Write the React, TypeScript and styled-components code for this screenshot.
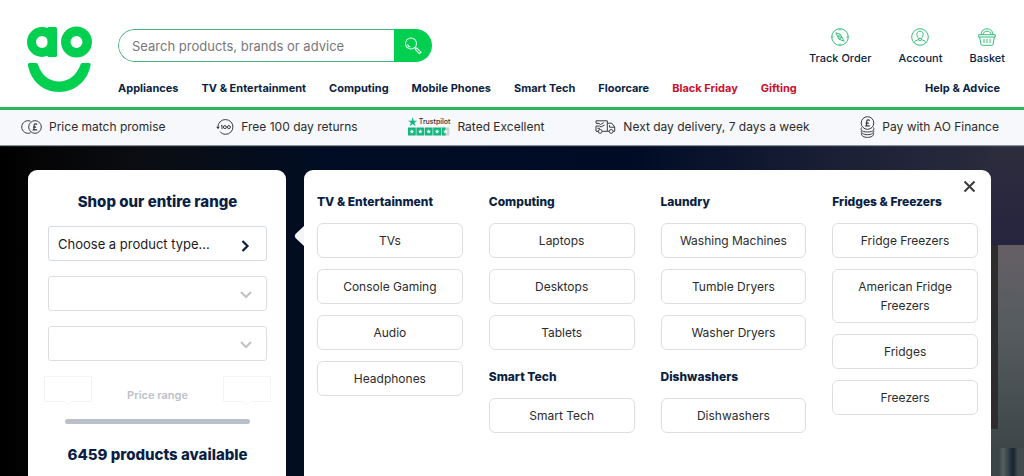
import React from "react";
import styled, { createGlobalStyle } from "styled-components";

const navy = "#0b1f44";
const green = "#00cf50";

const GlobalStyle = createGlobalStyle`
  *, *::before, *::after { box-sizing: border-box; }
  body { margin: 0; background: #fff; font-family: Inter, "Liberation Sans", sans-serif; color: #2b2b2e; }
  button, input, select { font-family: inherit; }
  a { color: inherit; text-decoration: none; }
  h2, h3, ul, p { margin: 0; padding: 0; }
  ul { list-style: none; }
`;

const Page = styled.div`
  min-height: 100vh;
  display: flex;
  flex-direction: column;
`;

const Header = styled.header`
  display: flex;
  gap: 26px;
  padding: 26px 19px 12px 26px;
  border-bottom: 3px solid #2bb75c;
`;

const LogoLink = styled.a`
  flex: none;
  width: 66px;
  height: 66px;
  svg { display: block; }
`;

const HeaderMain = styled.div`
  flex: 1;
  min-width: 0;
  display: flex;
  flex-direction: column;
  gap: 16px;
`;

const HeaderTop = styled.div`
  display: flex;
  justify-content: space-between;
  align-items: flex-start;
`;

const SearchForm = styled.form`
  display: flex;
  width: 314px;
  height: 33px;
  margin-top: 3px;
  border-radius: 17px;
  overflow: hidden;
`;

const SearchInput = styled.input`
  flex: 1;
  min-width: 0;
  padding: 0 13px;
  border: 1px solid #46b27c;
  border-right: 0;
  border-radius: 17px 0 0 17px;
  font-size: 13px;
  color: #333;
  outline: none;
  &::placeholder { color: #77777a; opacity: 1; }
`;

const SearchButton = styled.button`
  width: 38px;
  padding: 0;
  border: 0;
  background: ${green};
  display: flex;
  align-items: center;
  justify-content: center;
`;

const Account = styled.nav`
  display: flex;
  gap: 27px;
  padding-top: 2px;
`;

const AccountLink = styled.a`
  display: flex;
  flex-direction: column;
  align-items: center;
  gap: 5px;
  font-size: 11px;
  line-height: 14px;
  font-weight: 500;
  color: ${navy};
`;

const MainNav = styled.nav`
  display: flex;
  gap: 23px;
  padding-right: 5px;
  font-size: 11px;
  line-height: 14px;
  font-weight: 700;
  color: ${navy};
  white-space: nowrap;
`;

const NavLink = styled.a<{ $hot?: boolean; $end?: boolean }>`
  color: ${(p) => (p.$hot ? "#c8102e" : navy)};
  margin-left: ${(p) => (p.$end ? "auto" : "0")};
`;

const Promises = styled.ul`
  position: relative;
  display: flex;
  justify-content: space-between;
  align-items: center;
  height: 35px;
  padding: 0 25px 2px 21px;
  background: #f7f8fb;
  box-shadow: 0 1px 1px #8b9096;
  font-size: 12px;
  white-space: nowrap;
`;

const PromiseItem = styled.li`
  display: flex;
  align-items: center;
  gap: 7px;
`;

const Trust = styled.span`
  display: flex;
  flex-direction: column;
  width: 42px;
`;

const TrustName = styled.span`
  display: flex;
  align-items: center;
  gap: 1px;
  font-size: 7px;
  line-height: 10px;
  font-weight: 500;
`;

const Hero = styled.main`
  flex: 1;
  display: flex;
  align-items: stretch;
  gap: 18px;
  padding: 25px 33px 0 28px;
  background:
    linear-gradient(#2d2d2e, #2d2d2e) right 26px top 100px / 8px 184px no-repeat,
    linear-gradient(90deg, #3d4446 0 8px, #56605f 12px, #34444a 17px, #172330 22px, #424b4d 27px) right 0 top 303px / 33px 100% no-repeat,
    linear-gradient(#655f65, #565c60 40%, #3e4648) right 0 top 100px / 33px 203px no-repeat,
    linear-gradient(#2d2d3d, #27243f) right 0 top 0 / 33px 100px no-repeat,
    linear-gradient(90deg, #000 0, #050506 4%, #0b0d12 14%, #000d24 32%, #000c26 62%, #1b2036 82%, #2d2d3d 100%);
`;

const Finder = styled.section`
  flex: none;
  width: 258px;
  padding: 22px 19px 0 20px;
  border-radius: 9px 9px 0 0;
  background: #fff;
`;

const FinderTitle = styled.h2`
  font-size: 15px;
  line-height: 20px;
  font-weight: 800;
  color: ${navy};
  text-align: center;
`;

const Fields = styled.div`
  display: flex;
  flex-direction: column;
  gap: 15px;
  margin-top: 14px;
`;

const TypeButton = styled.button`
  display: flex;
  align-items: center;
  justify-content: space-between;
  height: 35px;
  padding: 0 16px 0 9px;
  border: 1px solid #d5dbe0;
  border-radius: 3px;
  background: #fff;
  font-size: 13px;
  color: #1c1c1f;
  svg { margin-top: 4px; }
`;

const SelectBox = styled.div`
  display: grid;
  align-items: center;
  svg { grid-area: 1 / 1; justify-self: end; margin: 2px 15px 0 0; pointer-events: none; }
`;

const Select = styled.select`
  grid-area: 1 / 1;
  width: 100%;
  height: 35px;
  border: 1px solid #dcdfe2;
  border-radius: 3px;
  background: #fff;
  appearance: none;
  opacity: 1;
`;

const PriceRow = styled.div`
  display: flex;
  justify-content: space-between;
  align-items: flex-start;
  margin: 15px -4px 0;
`;

const Bubble = styled.output`
  width: 48px;
  height: 29px;
  svg { display: block; }
`;

const PriceLabel = styled.label`
  padding-top: 12px;
  font-size: 11px;
  line-height: 14px;
  font-weight: 600;
  color: #bcc1c8;
`;

const Range = styled.input`
  display: block;
  appearance: none;
  width: calc(100% - 34px);
  height: 5px;
  margin: 14px 17px 0;
  border-radius: 3px;
  background: #b9c0c8;
  &::-webkit-slider-thumb { appearance: none; width: 0; height: 0; }
`;

const Available = styled.p`
  margin-top: 21px;
  font-size: 15px;
  line-height: 20px;
  font-weight: 800;
  color: ${navy};
  text-align: center;
  white-space: nowrap;
`;

const Menu = styled.section`
  position: relative;
  flex: 1;
  min-width: 0;
  display: grid;
  grid-template-columns: repeat(4, minmax(0, 1fr));
  align-content: start;
  gap: 26px;
  padding: 22px 13px 0;
  border-radius: 9px 9px 0 0;
  background: #fff;
`;

const Pointer = styled.svg`
  position: absolute;
  left: -10px;
  top: 56px;
`;

const CloseButton = styled.button`
  position: absolute;
  top: 10px;
  right: 15px;
  width: 13px;
  height: 13px;
  padding: 0;
  border: 0;
  background: none;
  svg { display: block; }
`;

const MenuColumn = styled.div`
  display: flex;
  flex-direction: column;
  gap: 17px;
`;

const GroupTitle = styled.h3`
  margin-bottom: 12px;
  font-size: 12px;
  line-height: 19px;
  font-weight: 800;
  color: ${navy};
  white-space: nowrap;
`;

const GroupList = styled.ul`
  display: flex;
  flex-direction: column;
  gap: 11px;
`;

const Category = styled.a`
  display: block;
  padding: 7px 16px;
  border: 1px solid #dcdfe2;
  border-radius: 6px;
  font-size: 12px;
  line-height: 19px;
  text-align: center;
`;

const Logo = () => (
  <svg width="66" height="66" viewBox="0 0 66 66" fill="none">
    <circle cx="16" cy="16" r="10.5" stroke={green} strokeWidth="9" />
    <rect x="21.500" y="1" width="9.500" height="30" rx="1.500" fill={green} />
    <circle cx="50.500" cy="16" r="10.700" stroke={green} strokeWidth="9.500" />
    <path d="M3.500 37H10.500Q11.500 37 12 38.500C15 49 23.500 55.500 33 55.500S51 49 54.500 38.500Q55 37 56 37H63Q65 37 64.500 39.500C61.500 55 49 66 33 66S5 55 2 39.500Q1.500 37 3.500 37Z" fill={green} />
  </svg>
);

const SearchIcon = () => (
  <svg width="18" height="18" viewBox="0 0 18 18" fill="none" stroke="#e6fff0" strokeWidth="1.100">
    <circle cx="7" cy="6.500" r="5.500" />
    <path d="M3.500 7.500A3.800 3.800 0 0 0 6.500 10M10.800 10.500L12 11.700M11.300 12.500L12.800 11L17 15.200L15.500 16.700Z" />
  </svg>
);

const iconProps = { width: 18, height: 18, viewBox: "0 0 18 18", fill: "none", stroke: "#35bd78", strokeWidth: 1 };

const TrackIcon = () => (
  <svg {...iconProps}>
    <circle cx="9" cy="9" r="8.300" />
    <path d="M4.800 4.800L9.200 6.200L13.200 13.200L8 11.200ZM7 8.600L9.200 6.200M8 11.200L11 9.200M7 8.600L11 9.200M9 1V2.500M9 15.500V17M1 9H2.500M15.500 9H17" />
  </svg>
);

const AccountIcon = () => (
  <svg {...iconProps}>
    <circle cx="9" cy="9" r="8.300" />
    <path d="M9 3.200C6.900 3.200 5.800 4.600 5.900 6.600C6 8.600 7.200 10.600 9 10.600S12 8.600 12.100 6.600C12.200 4.600 11.100 3.200 9 3.200ZM7.500 10.400V11.800L9 13L10.500 11.800V10.400M7.500 11.800C5.500 12.200 3.800 12.900 3.200 14.600M10.500 11.800C12.500 12.200 14.200 12.900 14.800 14.600" />
  </svg>
);

const BasketIcon = () => (
  <svg {...iconProps}>
    <path d="M.7 6.700H17.300V9H.7ZM1.700 9L2.900 16.200Q3.100 17.300 4.200 17.300H13.800Q14.900 17.300 15.100 16.200L16.300 9M6 10.800V15M9 10.800V15M12 10.800V15M3 6.700C3.200 3 5.500 .8 9 .8S14.800 3 15 6.700M5 6.700C5.300 4.300 6.700 3.200 9 3.200S12.700 4.300 13 6.700" />
  </svg>
);

const PriceIcon = () => (
  <svg width="21" height="14" viewBox="0 0 21 14" fill="none" stroke="#3a3a3d">
    <circle cx="14" cy="7" r="6.300" />
    <path d="M9.500 1.200A6.300 6.300 0 1 0 9.500 12.800" />
    <path strokeWidth="1.200" d="M16 4.700C15.500 3.400 13.300 3.500 13.100 5.200C13 6.800 13.600 8.500 12.400 9.900H16.200M12 7.100H15.200" />
  </svg>
);

const ReturnIcon = () => (
  <svg width="18" height="16" viewBox="0 0 18 16" fill="none" stroke="#3a3a3d">
    <path d="M2 9C1.600 4 5.200 .6 9.600 .6A7.300 7.300 0 0 1 9.600 15.300C7.300 15.300 5.300 14.300 4 12.600" />
    <path d="M.2 7.800H3.800L2 10.200Z" fill="#3a3a3d" stroke="none" />
    <path d="M5 6.700L6 6.200V10" />
    <circle cx="8.900" cy="8.100" r="1.500" />
    <circle cx="12.900" cy="8.100" r="1.500" />
  </svg>
);

const VanIcon = () => (
  <svg width="21" height="14" viewBox="0 0 21 14" fill="none" stroke="#3a3a3d">
    <path d="M1 3V.8H12.300V11.300H7.300M3.200 11.300H1V6M12.300 3.200H16.800L19.700 7V11.300H18.300M14 11.300H12.300M14.500 5.200V7.200H19.500" />
    <path d="M1 3.400H4L5.500 4.600L8.800 2.500M1 6H4.500L6 7L9.500 5M2.500 8.300H5" />
    <circle cx="5.200" cy="11.400" r="1.900" />
    <circle cx="16.200" cy="11.400" r="1.900" />
  </svg>
);

const CoinsIcon = () => (
  <svg width="15" height="22" viewBox="0 0 15 22" fill="none" stroke="#3a3a3d">
    <circle cx="7.500" cy="7" r="6.300" />
    <path d="M1.500 11.500C.5 13 1 16 7.500 16S14.500 13 13.500 11.500M1.300 14.500C.8 17 3.500 18.700 7.500 18.700S14.200 17 13.700 14.500M1.300 17.200C1.200 20 4 21.400 7.500 21.400S13.800 20 13.700 17.200" />
    <path strokeWidth="1.200" d="M9.600 4.700C9.100 3.400 6.900 3.500 6.700 5.200C6.600 6.800 7.200 8.500 6 9.900H9.800M5.600 7.100H8.800" />
  </svg>
);

const starPath = "M5 0L6.200 3.600H10L6.900 5.800L8.100 9.500L5 7.200L1.900 9.500L3.100 5.800L0 3.600H3.800Z";

const TrustStars = () => (
  <svg width="42" height="9" viewBox="0 0 42 9">
    {[0, 1, 2, 3, 4].map((i) => (
      <g key={i} transform={`translate(${i * 8.4} .5)`}>
        <rect width="7.800" height="8" fill={i === 4 ? "#c9d3d3" : "#12b67e"} />
        {i === 4 && <rect width="4" height="8" fill="#12b67e" />}
        <path d={starPath} transform="translate(1.400 1.500) scale(.5)" fill="#fff" />
      </g>
    ))}
  </svg>
);

const menu = [
  [{ title: "TV & Entertainment", items: ["TVs", "Console Gaming", "Audio", "Headphones"] }],
  [
    { title: "Computing", items: ["Laptops", "Desktops", "Tablets"] },
    { title: "Smart Tech", items: ["Smart Tech"] },
  ],
  [
    { title: "Laundry", items: ["Washing Machines", "Tumble Dryers", "Washer Dryers"] },
    { title: "Dishwashers", items: ["Dishwashers"] },
  ],
  [{ title: "Fridges & Freezers", items: ["Fridge Freezers", "American Fridge Freezers", "Fridges", "Freezers"] }],
];

const departments = ["Appliances", "TV & Entertainment", "Computing", "Mobile Phones", "Smart Tech", "Floorcare"];

const DisabledSelect = ({ label }: { label: string }) => (
  <SelectBox>
    <Select disabled aria-label={label} />
    <svg width="12" height="8" viewBox="0 0 12 8" fill="none" stroke="#bfc1c4" strokeWidth="2">
      <path d="M1 1L6 6L11 1" />
    </svg>
  </SelectBox>
);

const PriceBubble = () => (
  <Bubble>
    <svg width="48" height="29" viewBox="0 0 48 29" fill="none" stroke="#f4f4f5">
      <path d="M.5 .5H47.500V25.500H28L24 28.500L20 25.500H.5Z" />
    </svg>
  </Bubble>
);

export default function App() {
  return (
    <Page>
      <GlobalStyle />
      <Header>
        <LogoLink href="#" aria-label="AO home"><Logo /></LogoLink>
        <HeaderMain>
          <HeaderTop>
            <SearchForm role="search">
              <SearchInput type="search" aria-label="Search" placeholder="Search products, brands or advice" />
              <SearchButton type="button" aria-label="Submit search"><SearchIcon /></SearchButton>
            </SearchForm>
            <Account>
              <AccountLink href="#"><TrackIcon />Track Order</AccountLink>
              <AccountLink href="#"><AccountIcon />Account</AccountLink>
              <AccountLink href="#"><BasketIcon />Basket</AccountLink>
            </Account>
          </HeaderTop>
          <MainNav>
            {departments.map((d) => <NavLink key={d} href="#">{d}</NavLink>)}
            <NavLink href="#" $hot>Black Friday</NavLink>
            <NavLink href="#" $hot>Gifting</NavLink>
            <NavLink href="#" $end>Help &amp; Advice</NavLink>
          </MainNav>
        </HeaderMain>
      </Header>
      <Promises>
        <PromiseItem><PriceIcon />Price match promise</PromiseItem>
        <PromiseItem><ReturnIcon />Free 100 day returns</PromiseItem>
        <PromiseItem>
          <Trust>
            <TrustName>
              <svg width="10" height="10" viewBox="0 0 10 10"><path d={starPath} fill="#12b67e" /></svg>
              Trustpilot
            </TrustName>
            <TrustStars />
          </Trust>
          Rated Excellent
        </PromiseItem>
        <PromiseItem><VanIcon />Next day delivery, 7 days a week</PromiseItem>
        <PromiseItem><CoinsIcon />Pay with AO Finance</PromiseItem>
      </Promises>
      <Hero>
        <Finder>
          <FinderTitle>Shop our entire range</FinderTitle>
          <Fields>
            <TypeButton type="button">
              Choose a product type...
              <svg width="9" height="12" viewBox="0 0 9 12" fill="none" stroke={navy} strokeWidth="2.200">
                <path d="M1.500 1L6.500 6L1.500 11" />
              </svg>
            </TypeButton>
            <DisabledSelect label="Product feature" />
            <DisabledSelect label="Brand" />
          </Fields>
          <PriceRow>
            <PriceBubble />
            <PriceLabel htmlFor="price">Price range</PriceLabel>
            <PriceBubble />
          </PriceRow>
          <Range id="price" type="range" disabled />
          <Available>6459 products available</Available>
        </Finder>
        <Menu>
          <Pointer width="10" height="20" viewBox="0 0 10 20"><path d="M10 0L1.500 8Q0 10 1.500 12L10 20Z" fill="#f4f5f6" /></Pointer>
          <CloseButton type="button" aria-label="Close">
            <svg width="13" height="13" viewBox="0 0 13 13" stroke="#3c3c3f" strokeWidth="2">
              <path d="M1.500 1.500L11.500 11.500M11.500 1.500L1.500 11.500" />
            </svg>
          </CloseButton>
          {menu.map((groups) => (
            <MenuColumn key={groups[0].title}>
              {groups.map((g) => (
                <div key={g.title}>
                  <GroupTitle>{g.title}</GroupTitle>
                  <GroupList>
                    {g.items.map((item) => <li key={item}><Category href="#">{item}</Category></li>)}
                  </GroupList>
                </div>
              ))}
            </MenuColumn>
          ))}
        </Menu>
      </Hero>
    </Page>
  );
}
